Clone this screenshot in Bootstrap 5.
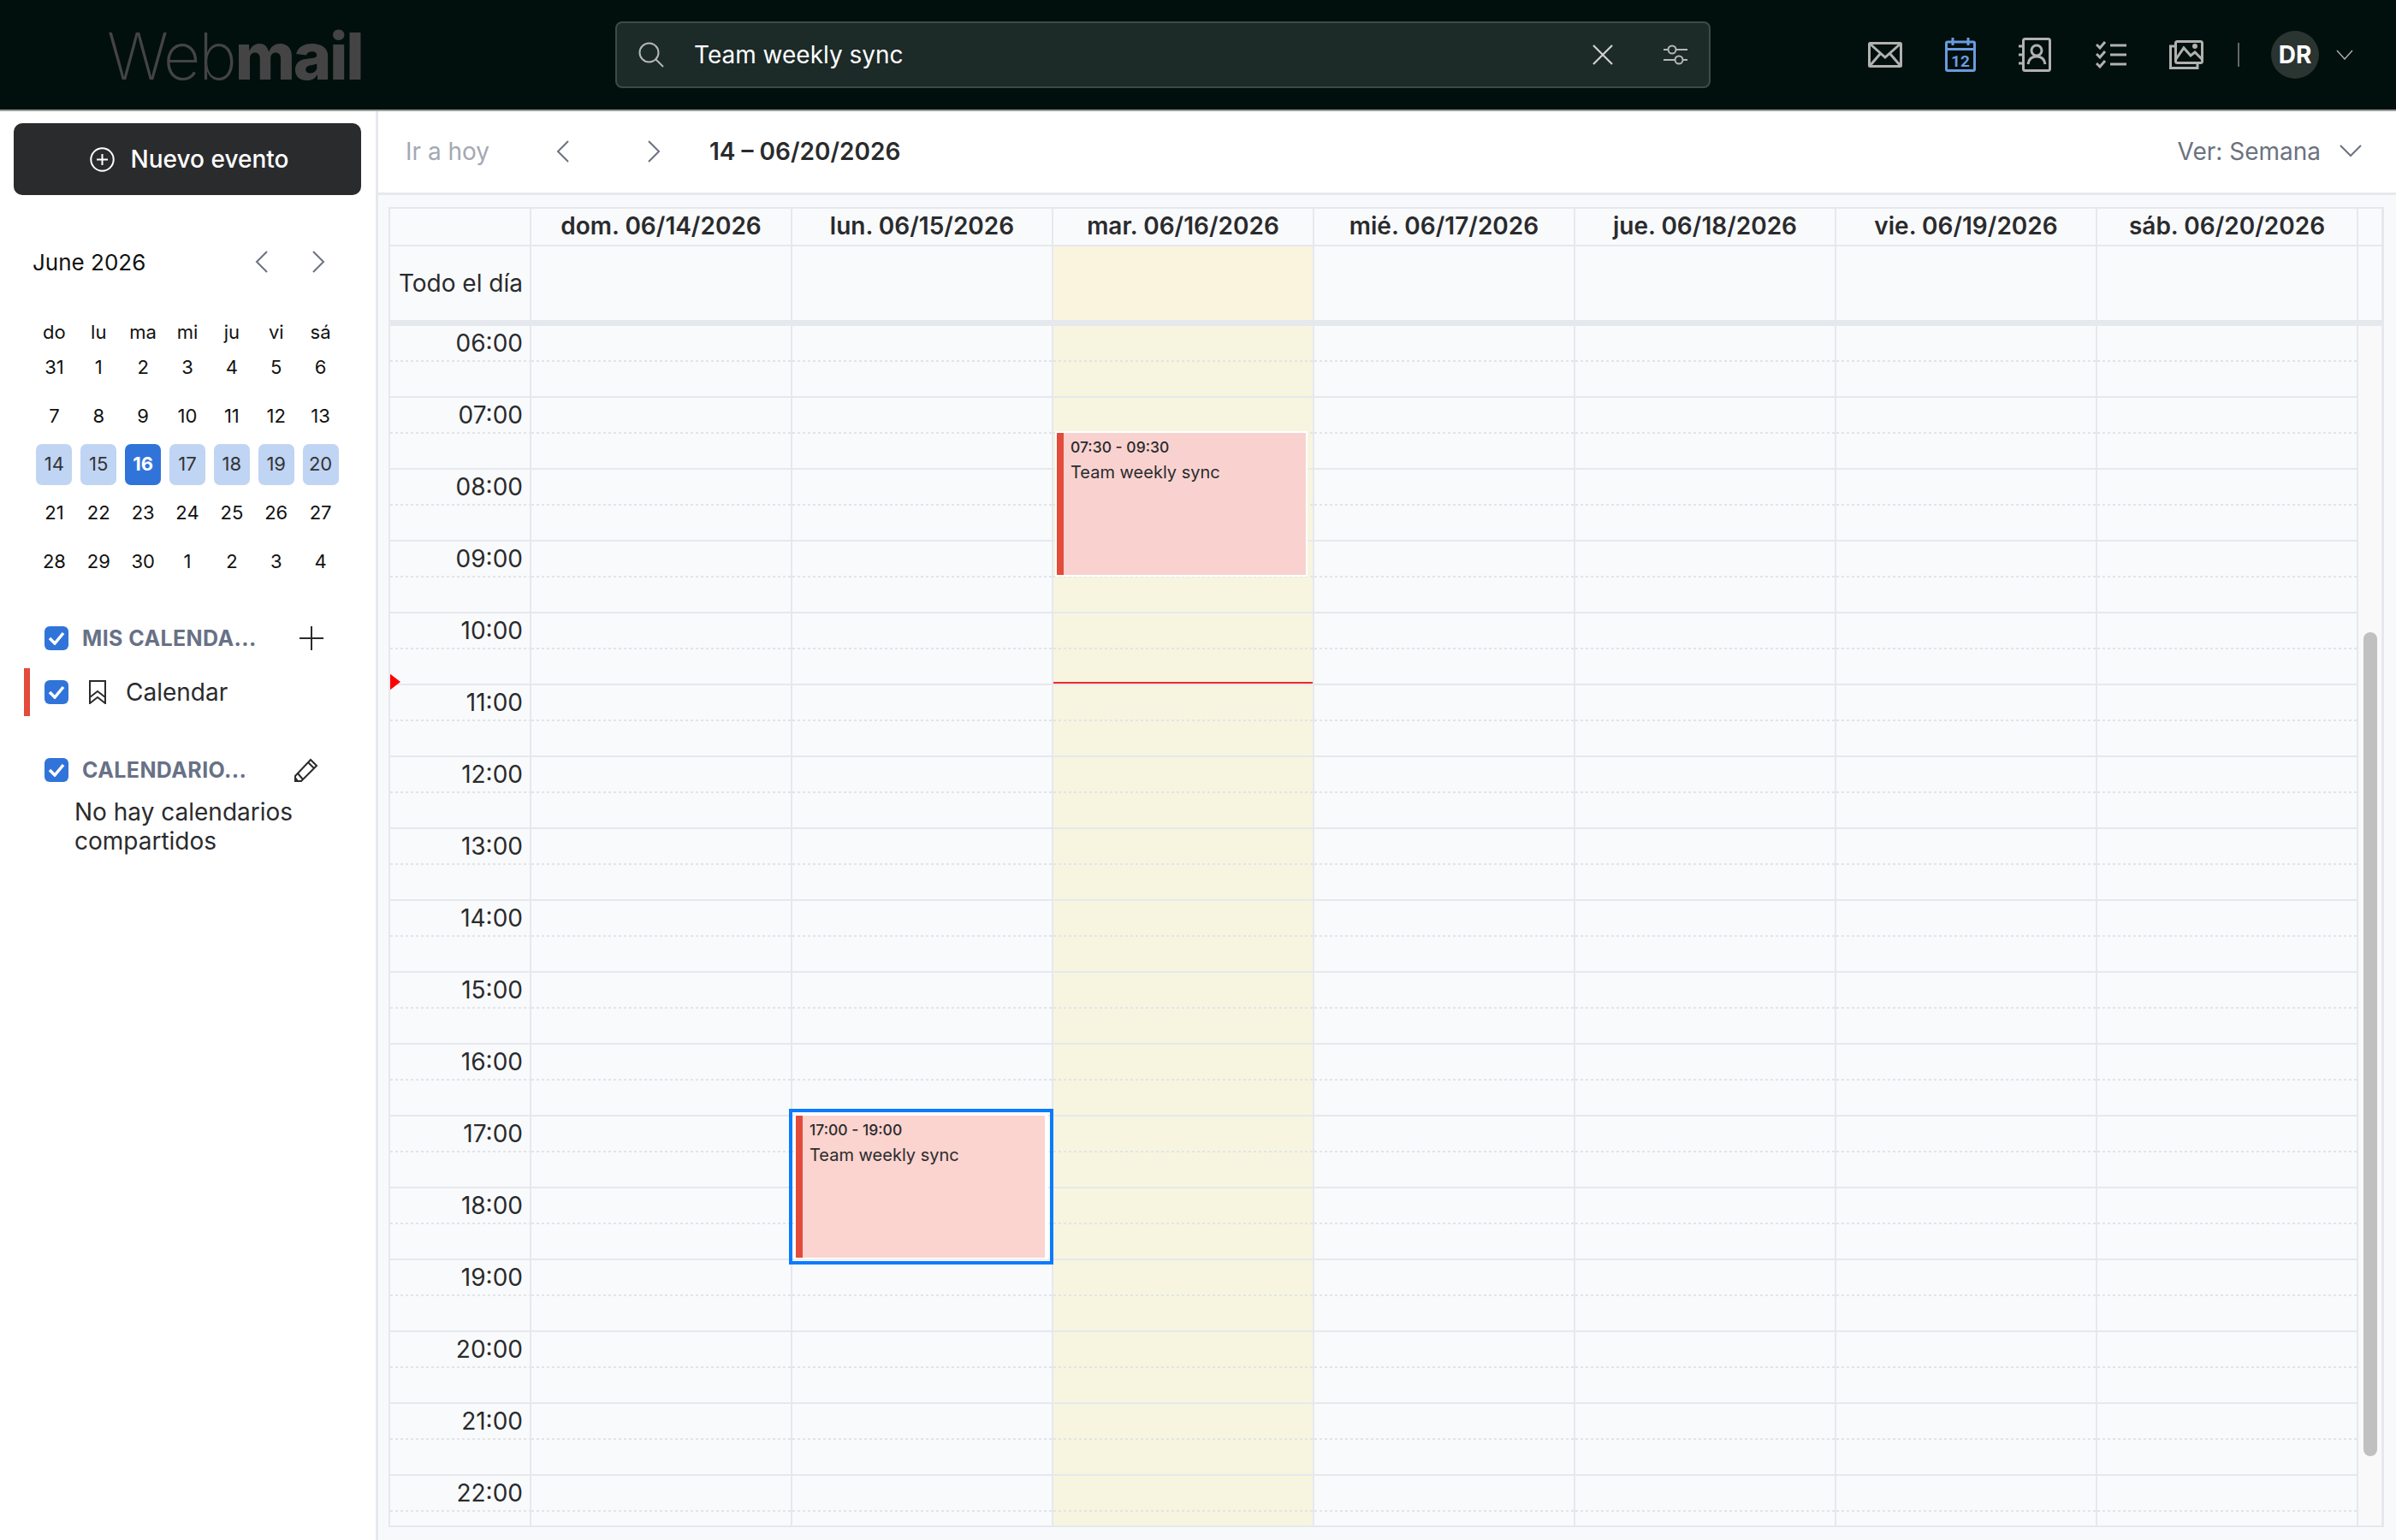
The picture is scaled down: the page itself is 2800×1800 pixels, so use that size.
<!DOCTYPE html>
<html lang="es">
<head>
  <meta charset="UTF-8" />
  <title>Webmail - Calendario</title>
  <link href="https://cdn.jsdelivr.net/npm/bootstrap@5.3.3/dist/css/bootstrap.min.css" rel="stylesheet" />
  <style>
    body { font-family: Inter, "Liberation Sans", sans-serif; height: 100vh; overflow: hidden; color: #2a2b2d; background: #fff; }

    /* top bar */
    .top-bar { height: 130px; background: #010f0d; border-bottom: 2px solid #9a9d9b; padding-left: 125px; }
    .brand { width: 594px; font-size: 76px; line-height: 1; color: #444; font-weight: 200; letter-spacing: -2.4px; margin-top: 1px; }
    .brand b { font-weight: 800; }
    .search-box { width: 1280px; height: 78px; background: #1c2a28; border: 2px solid #3d4a48; border-radius: 8px; color: #fff; font-size: 28px; padding: 0 24px 0 25px; }
    .search-box .query { margin-left: 35px; }
    .filter-icon { margin-left: 57px; }
    .top-icons { margin-left: 184px; }
    .gap-50 { margin-left: 50px; }
    .gap-52 { margin-left: 52px; }
    .top-sep { width: 2px; height: 28px; background: #666; margin: 0 37px 0 40px; }
    .avatar { width: 56px; height: 56px; border-radius: 50%; background: #2a3431; color: #fff; font-size: 28px; font-weight: 700; }
    .user-caret { margin-left: 20px; }

    /* sidebar */
    .side-col { width: 442px; height: 1670px; border-right: 3px solid #e6e8ee; padding: 14px 18px 0 16px; flex-shrink: 0; }
    .new-btn { height: 84px; width: 406px; background: #2a2b2d; color: #fff; border-radius: 10px; font-size: 28px; font-weight: 500; gap: 19px; padding-left: 4px; }
    .month-head { height: 40px; margin-top: 58px; padding-left: 22px; font-size: 26px; color: #111; }
    .month-prev { margin-left: 128px; }
    .month-next { margin-left: 52px; }
    .month-grid { display: grid; grid-template-columns: repeat(7, 51.86px); grid-template-rows: 26px repeat(5, 56.75px); margin: 49px 0 0 21.5px; font-size: 22px; color: #111; justify-items: center; align-items: center; }
    .day-chip { width: 42px; height: 48px; border-radius: 7px; background: #c0d4f3; color: #333; display: flex; align-items: center; justify-content: center; }
    .day-chip.sel { background: #3074d9; color: #fff; font-weight: 700; }
    .tick-box { width: 28px; height: 28px; border-radius: 6px; background: #3074d9; flex-shrink: 0; margin-left: 36px; display: flex; align-items: center; justify-content: center; }
    .side-sec { height: 28px; }
    .sec-mine { margin-top: 47px; }
    .sec-shared { margin-top: 49px; }
    .side-title { font-size: 25px; line-height: 28px; font-weight: 700; color: #687186; margin-left: 16px; letter-spacing: .4px; }
    .title-mine { width: 204px; }
    .title-shared { width: 194px; }
    .add-icon { margin-left: 50px; }
    .edit-icon { margin-left: 53px; }
    .cal-row { height: 56px; margin: 21px 0 0 12px; border-left: 7px solid #e34b3b; font-size: 28px; }
    .cal-row .tick-box { margin-left: 17px; }
    .mark-icon { margin-left: 24px; }
    .cal-name { margin-left: 23px; }
    .shared-note { margin: 18px 0 0 71px; font-size: 28px; line-height: 34px; }

    /* toolbar */
    .tool-bar { height: 98px; border-bottom: 3px solid #e6e8ee; padding: 0 40px 2px 32px; font-size: 28px; background: #fff; }
    .today-link { color: #a4a8b3; width: 176px; }
    .next-btn { margin-left: 92px; }
    .range-label { font-weight: 600; font-size: 28px; margin-left: 57px; }
    .view-label { color: #6b7280; }
    .view-caret { margin-left: 22px; }

    /* week grid */
    .week-area { height: 1572px; background: #f8f9fb; padding: 14px 14px 0 12px; }
    .week-box { height: 1543px; border: 2px solid #e6e8ee; border-right-width: 3px; background: #f9fafc; overflow: hidden; }
    .week-row { display: grid; grid-template-columns: 165px repeat(7, 305px) 27px; }
    .week-row > div { border-right: 2px solid #e6e8ee; }
    .week-row > div:last-child { border-right: 0; }
    .head-row > div { height: 44px; border-bottom: 2px solid #e6e8ee; font-weight: 600; font-size: 28px; text-align: center; line-height: 40px; }
    .allday-row > div { height: 86px; font-size: 28px; }
    .allday-row .time-cell { line-height: 86px; text-align: right; padding-right: 8px; white-space: nowrap; }
    .allday-row .is-today { background: #faf4df; }
    .thick-line { height: 7px; background: #e5e8ec; }
    .hours-wrap { display: flex; height: 1402px; }
    .hours-col { position: relative; width: 2300px; }
    .week-row.hour-row { grid-template-columns: 165px repeat(7, 305px); }
    .week-row.hour-row > div:last-child { border-right: 2px solid #e6e8ee; }
    .hour-row > div { height: 84px; border-bottom: 2px solid #e6e8ee; background-image: repeating-linear-gradient(to right, #e1e4e8 0 3px, transparent 3px 6px); background-size: 100% 2px; background-position: 0 40px; background-repeat: no-repeat; }
    .hour-row .is-today { background-color: #f7f5df; }
    .hour-row .time-cell { font-size: 28px; text-align: right; padding-right: 8px; line-height: 40px; }
    .scroll-gutter { width: 27px; background: #f9f9fa; }
    .scroll-thumb { width: 16px; height: 963px; margin: 358px 0 0 6px; border-radius: 8px; background: #c0c0c0; }

    .ev-block { position: absolute; width: 295px; height: 170px; background: #f9d2d0; border: 2px solid #fff; padding: 6px 0 0 16px; overflow: hidden; color: #2a2b2d; }
    .ev-block::before { content: ""; position: absolute; left: 0; top: 0; bottom: 0; width: 8px; background: #e34b3b; }
    .ev-block .ev-time { font-size: 17.5px; font-weight: 500; line-height: 22px; }
    .ev-block .ev-name { font-size: 20px; line-height: 26px; margin-top: 5px; }
    .ev-block.selected { border-right-width: 4px; width: 297px; outline: 4px solid #0a7bff; outline-offset: 2px; background: #fbd3cf; }
    .ev-mar { left: 777px; top: 123px; }
    .ev-lun { left: 472px; top: 921px; }
    .now-line { position: absolute; left: 775px; top: 416px; width: 303px; height: 2px; background: #f02a2a; }
    .now-mark { position: absolute; left: -1px; top: 406px; border-left: 13px solid #f00; border-top: 10px solid transparent; border-bottom: 10px solid transparent; }
  </style>
</head>
<body>
  <header class="top-bar d-flex align-items-center">
    <div class="brand">Web<b>mail</b></div>
    <div class="search-box d-flex align-items-center">
      <svg width="30" height="30" viewBox="0 0 30 30" fill="none" stroke="#b5b8b6" stroke-width="2"><circle cx="12.5" cy="12.5" r="11"/><path d="M20.5 20.5 29 29"/></svg>
      <span class="query">Team weekly sync</span>
      <svg class="ms-auto" width="26" height="26" viewBox="0 0 26 26" fill="none" stroke="#d0d2d0" stroke-width="2.2"><path d="M2 2 24 24M24 2 2 24"/></svg>
      <svg class="filter-icon" width="30" height="26" viewBox="0 0 30 26" fill="none" stroke="#b5b8b6" stroke-width="2"><path d="M16 7h13M1 7h5M1 19h13M24 19h5"/><circle cx="11" cy="7" r="4.5"/><circle cx="19" cy="19" r="4.5"/></svg>
    </div>
    <div class="top-icons d-flex align-items-center">
      <svg width="40" height="30" viewBox="0 0 40 30" fill="none" stroke="#b0b2b0" stroke-width="3"><rect x="1.5" y="1.5" width="37" height="27" rx="1"/><path d="M2 2 20 18 38 2M2 28 15 13M38 28 25 13"/></svg>
      <svg class="gap-50" width="36" height="40" viewBox="0 0 36 40" fill="none" stroke="#6a9be0" stroke-width="3"><rect x="1.5" y="5" width="33" height="33.5" rx="1.5"/><path d="M2 13.5h32M9 0v9M27 0v9"/><text x="18" y="34" text-anchor="middle" font-family="Roboto, sans-serif" font-size="19" font-weight="700" fill="#6a9be0" stroke="none">12</text></svg>
      <svg class="gap-50" width="38" height="40" viewBox="0 0 38 40" fill="none" stroke="#b0b2b0" stroke-width="3"><rect x="5.5" y="1.5" width="31" height="37" rx="2"/><path d="M0 10h5M0 20h5M0 30h5"/><circle cx="21" cy="15" r="6"/><path d="M11 31c1-7 5-9 10-9s9 2 10 9"/></svg>
      <svg class="gap-52" width="36" height="32" viewBox="0 0 36 32" fill="none" stroke="#b0b2b0" stroke-width="3"><path d="M1 4l4 4 6-7M1 15l4 4 6-7M1 26l4 4 6-7"/><path d="M17 5h19M17 16h19M17 27h19"/></svg>
      <svg class="gap-50" width="40" height="34" viewBox="0 0 40 34" fill="none" stroke="#b0b2b0" stroke-width="3"><rect x="7.5" y="1.5" width="31" height="25" rx="2"/><path d="M7 7H1.5v25.5H33V27"/><path d="M8 22 17 9l8 9 5-4 8 8"/><circle cx="30" cy="7" r="1.5"/></svg>
      <div class="top-sep"></div>
      <div class="avatar d-flex align-items-center justify-content-center">DR</div>
      <svg class="user-caret" width="20" height="12" viewBox="0 0 20 12" fill="none" stroke="#aaa" stroke-width="1.5"><path d="M1 1l9 10 9-10"/></svg>
    </div>
  </header>

  <div class="d-flex">
    <aside class="side-col">
      <div class="new-btn d-flex align-items-center justify-content-center">
        <svg width="29" height="29" viewBox="0 0 29 29" fill="none" stroke="#fff" stroke-width="2"><circle cx="14.5" cy="14.5" r="13.2"/><path d="M14.5 8v13M8 14.5h13"/></svg>
        <span>Nuevo evento</span>
      </div>
      <div class="month-head d-flex align-items-center">
        <span>June 2026</span>
        <svg class="month-prev" width="15" height="26" viewBox="0 0 15 26" fill="none" stroke="#6b7280" stroke-width="2"><path d="M14 1 2 13l12 12"/></svg>
        <svg class="month-next" width="15" height="26" viewBox="0 0 15 26" fill="none" stroke="#6b7280" stroke-width="2"><path d="M1 1l12 12L1 25"/></svg>
      </div>
      <div class="month-grid" id="monthGrid"></div>

      <div class="side-sec sec-mine d-flex align-items-center">
        <span class="tick-box"><svg width="20" height="16" viewBox="0 0 20 16" fill="none" stroke="#fff" stroke-width="3.5"><path d="M2 8l6 6L18 2"/></svg></span>
        <span class="side-title title-mine">MIS CALENDA...</span>
        <svg class="add-icon" width="28" height="28" viewBox="0 0 28 28" fill="none" stroke="#2a2b2d" stroke-width="2"><path d="M14 0v28M0 14h28"/></svg>
      </div>
      <div class="cal-row d-flex align-items-center">
        <span class="tick-box"><svg width="20" height="16" viewBox="0 0 20 16" fill="none" stroke="#fff" stroke-width="3.5"><path d="M2 8l6 6L18 2"/></svg></span>
        <svg class="mark-icon" width="20" height="28" viewBox="0 0 20 28" fill="none" stroke="#2a2b2d" stroke-width="2"><path d="M1 1h18v26l-9-7-9 7zM1 20l9-7 9 7"/></svg>
        <span class="cal-name">Calendar</span>
      </div>
      <div class="side-sec sec-shared d-flex align-items-center">
        <span class="tick-box"><svg width="20" height="16" viewBox="0 0 20 16" fill="none" stroke="#fff" stroke-width="3.5"><path d="M2 8l6 6L18 2"/></svg></span>
        <span class="side-title title-shared">CALENDARIO...</span>
        <svg class="edit-icon" width="30" height="30" viewBox="0 0 30 30" fill="none" stroke="#2a2b2d" stroke-width="2"><path d="M2 22 20 3l7 7L9 28H2zM17 6l7 7M5 19l6 7M2 24l3 4"/></svg>
      </div>
      <div class="shared-note">No hay calendarios compartidos</div>
    </aside>

    <main class="flex-grow-1">
      <div class="tool-bar d-flex align-items-center">
        <span class="today-link">Ir a hoy</span>
        <svg width="15" height="26" viewBox="0 0 15 26" fill="none" stroke="#6b7280" stroke-width="2"><path d="M14 1 2 13l12 12"/></svg>
        <svg class="next-btn" width="15" height="26" viewBox="0 0 15 26" fill="none" stroke="#6b7280" stroke-width="2"><path d="M1 1l12 12L1 25"/></svg>
        <span class="range-label">14 – 06/20/2026</span>
        <span class="view-label ms-auto">Ver: Semana</span>
        <svg class="view-caret" width="26" height="15" viewBox="0 0 26 15" fill="none" stroke="#6b7280" stroke-width="2"><path d="M1 1l12 12L25 1"/></svg>
      </div>
      <div class="week-area">
        <div class="week-box">
          <div class="week-row head-row" id="headRow"></div>
          <div class="week-row allday-row">
            <div class="time-cell">Todo el día</div>
            <div></div><div></div><div class="is-today"></div><div></div><div></div><div></div><div></div><div></div>
          </div>
          <div class="thick-line"></div>
          <div class="hours-wrap">
            <div class="hours-col" id="hoursCol">
              <div class="now-mark"></div>
              <div class="now-line"></div>
              <div class="ev-block ev-mar">
                <div class="ev-time">07:30 - 09:30</div>
                <div class="ev-name">Team weekly sync</div>
              </div>
              <div class="ev-block ev-lun selected">
                <div class="ev-time">17:00 - 19:00</div>
                <div class="ev-name">Team weekly sync</div>
              </div>
            </div>
            <div class="scroll-gutter"><div class="scroll-thumb"></div></div>
          </div>
        </div>
      </div>
    </main>
  </div>

  <script>
    // mini month
    const monthGrid = document.getElementById("monthGrid");
    const dows = ["do", "lu", "ma", "mi", "ju", "vi", "sá"];
    const days = [31, 1, 2, 3, 4, 5, 6, 7, 8, 9, 10, 11, 12, 13, 14, 15, 16, 17, 18, 19, 20, 21, 22, 23, 24, 25, 26, 27, 28, 29, 30, 1, 2, 3, 4];
    let monthHtml = dows.map(d => `<div>${d}</div>`).join("");
    days.forEach((d, i) => {
      if (i >= 14 && i <= 20) {
        monthHtml += `<div class="day-chip ${d === 16 ? "sel" : ""}">${d}</div>`;
      } else {
        monthHtml += `<div>${d}</div>`;
      }
    });
    monthGrid.innerHTML = monthHtml;

    // week header
    const heads = ["dom. 06/14/2026", "lun. 06/15/2026", "mar. 06/16/2026", "mié. 06/17/2026", "jue. 06/18/2026", "vie. 06/19/2026", "sáb. 06/20/2026"];
    document.getElementById("headRow").innerHTML = "<div></div>" + heads.map(h => `<div>${h}</div>`).join("") + "<div></div>";

    // hour rows
    const hoursCol = document.getElementById("hoursCol");
    for (let h = 6; h <= 22; h++) {
      const row = document.createElement("div");
      row.className = "week-row hour-row";
      let cells = `<div class="time-cell">${String(h).padStart(2, "0")}:00</div>`;
      for (let c = 0; c < 7; c++) {
        cells += `<div class="${c === 2 ? "is-today" : ""}"></div>`;
      }
      row.innerHTML = cells;
      hoursCol.appendChild(row);
    }
  </script>

  <script src="https://cdn.jsdelivr.net/npm/bootstrap@5.3.3/dist/js/bootstrap.bundle.min.js"></script>
</body>
</html>
